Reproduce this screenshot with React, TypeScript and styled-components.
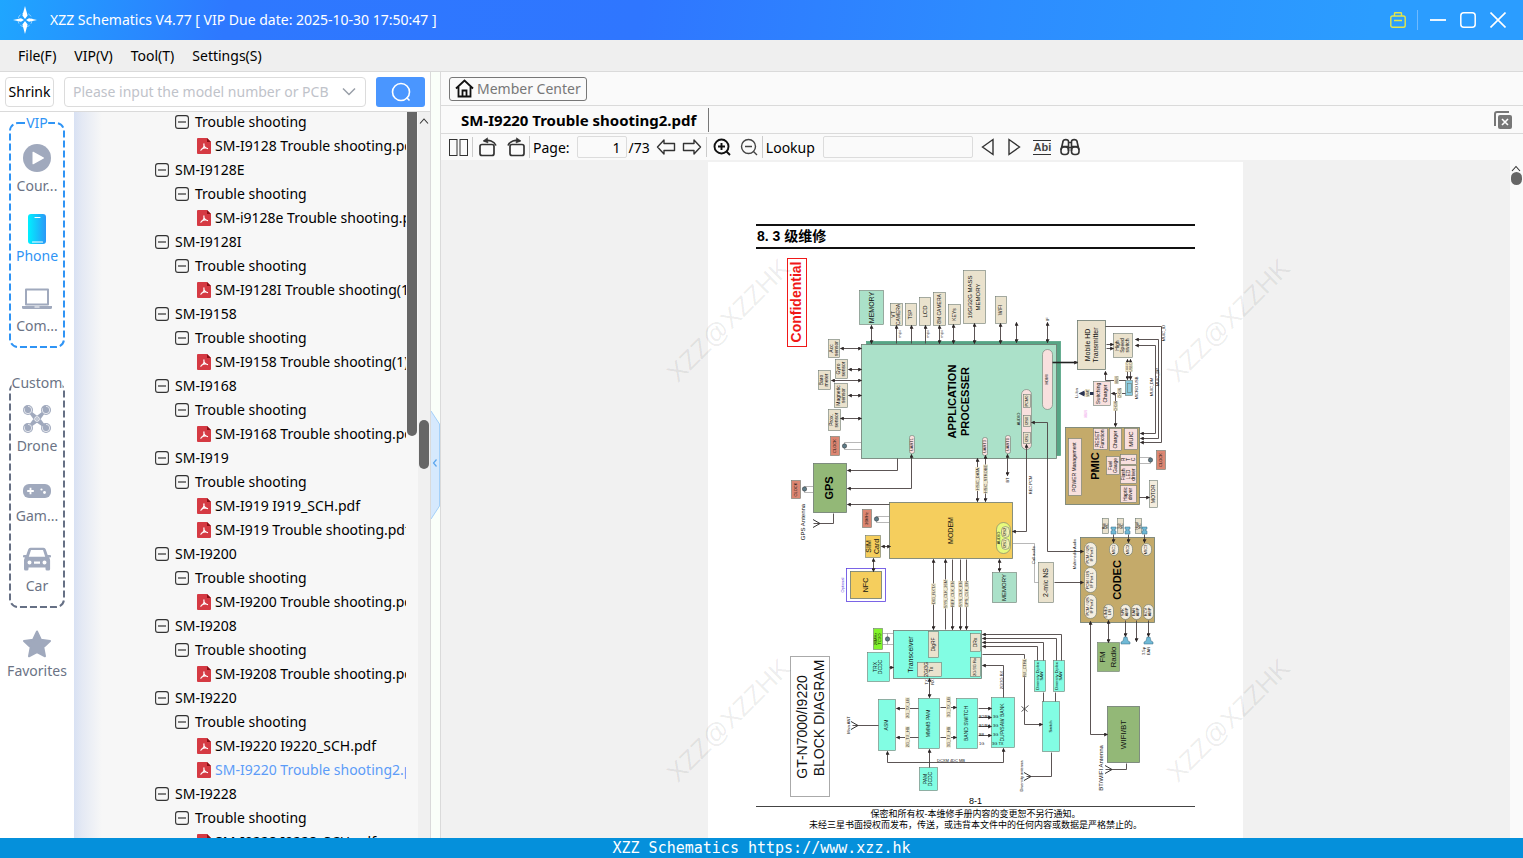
import React from 'react';
import styled, { createGlobalStyle, css } from 'styled-components';

const UI = '"Noto Sans", "Open Sans", "Noto Sans CJK SC", sans-serif';
const ARIAL = '"Liberation Sans", Arial, "Noto Sans CJK SC", sans-serif';

const Global = createGlobalStyle`
  * { box-sizing: border-box; }
  body { margin: 0; font-family: ${UI}; font-size: 14px; color: #000; }
  button, input { font: inherit; color: inherit; }
  svg { display: block; flex: none; }
`;

const Shell = styled.div`
  display: flex;
  flex-direction: column;
  height: 100vh;
  overflow: hidden;
  background: #fafafa;
`;

/* ---------- title bar and menu ---------- */

const TitleBar = styled.header`
  flex: none;
  display: flex;
  align-items: center;
  height: 40px;
  padding: 0 16px 0 12px;
  background: linear-gradient(100deg, #1fa6ff 0%, #2e78ff 15%, #2f76ff 42%, #2d8cff 65%, #2b9dff 90%);
  color: #fff;
`;
const AppTitle = styled.h1`
  flex: 1;
  margin: 0 0 0 12px;
  font-size: 14px;
  font-weight: 400;
  line-height: 20px;
  white-space: nowrap;
`;
const WindowButtons = styled.div`
  display: flex;
  align-items: center;
  gap: 12px;
`;
const IconButton = styled.button`
  flex: none;
  display: flex;
  align-items: center;
  justify-content: center;
  width: ${(p: { $w?: number }) => p.$w ?? 18}px;
  height: 20px;
  padding: 0;
  border: 0;
  background: none;
`;
const TitleDivider = styled.span`
  width: 1px;
  height: 20px;
  margin: 0 -1px 0 -2px;
  background: #6fbaff;
`;
const MenuBar = styled.nav`
  flex: none;
  display: flex;
  align-items: center;
  gap: 18px;
  height: 32px;
  padding: 0 18px;
  background: #efefef;
  border-bottom: 1px solid #dadada;
`;
const MenuButton = styled.button`
  padding: 0;
  border: 0;
  background: none;
  line-height: 20px;
`;

/* ---------- left side ---------- */

const Body = styled.div`
  flex: 1;
  display: flex;
  min-height: 0;
`;
const LeftPanel = styled.aside`
  flex: none;
  display: flex;
  flex-direction: column;
  width: 431px;
  border-right: 1px solid #dadada;
  background: #fff;
`;
const SearchRow = styled.form`
  flex: none;
  display: flex;
  align-items: center;
  gap: 10px;
  height: 40px;
  padding: 0 5px;
  border-bottom: 1px solid #dadada;
`;
const ShrinkButton = styled.button`
  width: 49px;
  height: 30px;
  padding: 0;
  border: 1px solid #dcdcdc;
  border-radius: 4px;
  background: #fff;
`;
const ModelBox = styled.label`
  flex: 1;
  display: flex;
  align-items: center;
  min-width: 0;
  height: 30px;
  padding: 0 8px;
  border: 1px solid #dcdcdc;
  border-radius: 4px;
`;
const ModelInput = styled.input`
  flex: 1;
  min-width: 0;
  padding: 0;
  border: 0;
  outline: 0;
  background: none;
  &::placeholder { color: #bfc3ca; opacity: 1; }
`;
const SearchButton = styled.button`
  display: flex;
  align-items: center;
  justify-content: center;
  width: 49px;
  height: 30px;
  padding: 0;
  border: 0;
  border-radius: 3px;
  background: #4a96ff;
`;
const Browser = styled.div`
  flex: 1;
  display: flex;
  min-height: 0;
`;
const CategoryNav = styled.nav`
  flex: none;
  display: flex;
  flex-direction: column;
  width: 74px;
  padding: 10px 0;
  background: #fff;
`;
const Group = styled.section<{ $color: string }>`
  position: relative;
  margin: 0 8px 34px;
  padding-top: 16px;
  color: ${(p) => p.$color};
`;
const GroupFrame = styled.svg`
  position: absolute;
  inset: 0;
  width: 100%;
  height: 100%;
`;
const GroupName = styled.h2`
  position: absolute;
  top: -9px;
  left: 50%;
  transform: translateX(-50%);
  margin: 0;
  background: #fff;
  font-size: 14px;
  font-weight: 400;
  line-height: 20px;
`;
const Category = styled.button<{ $active?: boolean }>`
  position: relative;
  display: flex;
  flex-direction: column;
  align-items: center;
  width: 100%;
  height: 70px;
  padding: 0;
  border: 0;
  background: none;
  font-size: 14px;
  line-height: 16px;
  color: ${(p) => (p.$active ? '#2f94f5' : '#6b7385')};
`;
const CategoryIcon = styled.span`
  display: flex;
  align-items: center;
  justify-content: center;
  height: 40px;
`;
const Favorites = styled.div`
  margin-top: -19px;
`;
const Tree = styled.ul`
  flex: 1;
  min-width: 0;
  margin: 0;
  padding: 0;
  list-style: none;
  overflow: hidden;
  background: linear-gradient(90deg, #d8e1f3 0, #e4e9f4 8px, #f7f7f7 28px);
`;
const TreeRow = styled.li<{ $level: number; $active?: boolean }>`
  display: flex;
  align-items: center;
  gap: ${(p) => (p.$level === 2 ? 4 : 6)}px;
  height: 24px;
  margin-right: 1px;
  padding-left: ${(p) => [81, 101, 123][p.$level]}px;
  overflow: hidden;
  white-space: nowrap;
  line-height: 24px;
  ${(p) => p.$active && css`color: #5c9cf8;`}
  &:first-child { margin-top: -2px; }
`;
const ToggleButton = styled.button`
  flex: none;
  display: flex;
  padding: 0;
  border: 0;
  background: none;
`;
const TreeBar = styled.div`
  flex: none;
  display: flex;
  flex-direction: column;
  width: 11px;
  padding: 0 1px 0 0;
  background: #f7f7f7;
`;
const BarSpace = styled.div<{ $grow: number }>`
  flex: ${(p) => p.$grow} 0 0;
`;
const TreeThumb = styled.div`
  flex: 324 0 0;
  background: #666;
  border-radius: 0 0 5px 5px;
`;
const ListBar = styled.div`
  flex: none;
  display: flex;
  flex-direction: column;
  align-items: center;
  width: 12px;
  background: #f0f0f0;
`;
const ListThumb = styled.div`
  width: 10px;
  height: 49px;
  border-radius: 5px;
  background: #666;
`;
const Gutter = styled.div`
  flex: none;
  display: flex;
  align-items: center;
  width: 9px;
  padding-top: 19px;
  background: #fafff9;
`;
const CollapseButton = styled.button`
  padding: 0;
  border: 0;
  background: none;
`;

/* ---------- viewer ---------- */

const Viewer = styled.main`
  flex: 1;
  display: flex;
  flex-direction: column;
  min-width: 0;
  border-left: 1px solid #dadada;
`;
const MemberRow = styled.div`
  flex: none;
  display: flex;
  align-items: center;
  height: 34px;
  padding: 0 8px;
  border-bottom: 1px solid #dadada;
`;
const MemberButton = styled.button`
  display: flex;
  align-items: center;
  gap: 3px;
  height: 24px;
  padding: 0 5px;
  border: 1px solid #777;
  border-radius: 3px;
  background: #fafafa;
  color: #777;
`;
const TabRow = styled.div`
  flex: none;
  display: flex;
  align-items: center;
  justify-content: space-between;
  height: 28px;
  padding: 0 10px 0 8px;
  border-bottom: 1px solid #dadada;
`;
const Tab = styled.button`
  height: 24px;
  padding: 0 12px;
  border: 0;
  border-right: 1px solid #777;
  background: none;
  font-size: 15px;
  font-weight: 700;
`;
const Toolbar = styled.div`
  flex: none;
  display: flex;
  align-items: center;
  height: 26px;
  padding: 0 8px;
  white-space: nowrap;
`;
const ToolGroup = styled.div<{ $gap: number }>`
  display: flex;
  align-items: center;
  gap: ${(p) => p.$gap}px;
  padding-right: 4px;
  & + & { padding-left: 6px; border-left: 1px solid #ccc; }
`;
const LabelledGroup = styled(ToolGroup)`
  && { padding-left: 3px; }
`;
const Field = styled.input<{ $w: number }>`
  width: ${(p) => p.$w}px;
  height: 22px;
  padding: 0 5px;
  border: 1px solid #dcdcdc;
  border-radius: 2px;
  background: #fafafa;
  text-align: right;
`;
const PageCount = styled.span`
  margin-left: -5px;
`;
const Canvas = styled.div`
  flex: 1;
  display: flex;
  min-height: 0;
`;
const Desk = styled.div`
  position: relative;
  flex: 1;
  display: flex;
  justify-content: center;
  min-width: 0;
  padding-top: 2px;
  overflow: hidden;
  background: #f1f1f1;
`;
const Watermark = styled.svg`
  position: absolute;
  inset: 0;
  width: 100%;
  height: 100%;
  pointer-events: none;
`;
const Sheet = styled.article`
  flex: none;
  width: 535px;
  min-height: 700px;
  padding-top: 62px;
  background: #fff;
  font-family: ${ARIAL};
`;
const SheetTitle = styled.h2`
  margin: 0 48px;
  border-top: 2px solid #111;
  border-bottom: 2px solid #111;
  font-size: 14px;
  font-weight: 700;
  line-height: 21px;
  text-indent: 1px;
`;
const SheetFoot = styled.footer`
  margin: 0 48px;
  font-size: 9px;
  line-height: 11px;
  text-align: center;
  p { margin: 0; }
  p:first-child { line-height: 10px; border-bottom: 1px solid #444; margin-bottom: 2px; }
`;
const ViewBar = styled.div`
  flex: none;
  display: flex;
  flex-direction: column;
  align-items: center;
  justify-content: space-between;
  width: 13px;
  padding-top: 5px;
  background: #fafafa;
`;
const ViewThumb = styled.div`
  width: 11px;
  height: 13px;
  border-radius: 6px;
  background: #666;
`;
const StatusBar = styled.footer`
  flex: none;
  height: 20px;
  background: #0590db;
  color: #fff;
  font-family: "DejaVu Sans Mono", "Liberation Mono", monospace;
  font-size: 15px;
  line-height: 20px;
  text-align: center;
`;

/* ---------- block diagram ---------- */

const MINT = '#abe1c9';
const CREAM = '#eae2cd';
const PINK = '#f8e0de';
const SAND = '#c4aa6a';
const RED = '#dc8672';
const GREEN = '#93b877';
const GOLD = '#f5ce5d';
const AQUA = '#82fde3';

type Block = {
  x: number; y: number; w: number; h: number; fill: string;
  t?: string[]; s?: number; bold?: boolean; r?: number; stroke?: string; dx?: number; lh?: number;
};

const b = (x: number, y: number, w: number, h: number, fill: string, text = '', s = 5, more: Partial<Block> = {}): Block =>
  ({ x, y, w, h, fill, t: text ? text.split('|') : [], s, ...more });

const blocks: Block[] = [
  b(859, 290, 24, 34, MINT, 'MEMORY', 7),
  b(890, 303, 12, 22, CREAM, 'VT|CAMERA', 5),
  b(905, 303, 11, 22, CREAM, 'TSP', 5),
  b(919, 297, 11, 28, CREAM, 'LCD', 6),
  b(933, 292, 12, 33, CREAM, '8M CAMERA', 5),
  b(948, 304, 12, 20, CREAM, 'KEYs', 5),
  b(963, 270, 22, 53, CREAM, '16G/32G MASS|MEMORY', 6, { lh: 8 }),
  b(995, 296, 11, 27, CREAM, 'WIFI', 5),
  b(866, 341, 194, 114, '#56a585', '', 5, { stroke: '#56a585' }),
  b(861, 344, 195, 114, MINT, 'APPLICATION|PROCESSER', 11, { bold: true, lh: 13 }),
  b(828, 339, 11, 18, CREAM, 'Acc|sensor', 5),
  b(835, 359, 12, 19, CREAM, 'Gyro|sensor', 5),
  b(818, 370, 12, 19, CREAM, 'Baro|meter', 5),
  b(834, 383, 13, 24, CREAM, 'Magnetic|sensor', 5),
  b(828, 409, 12, 21, CREAM, 'Prox.|sensor', 5),
  b(830, 436, 9, 19, RED, 'CLOCK', 4),
  b(909, 435, 5, 18, PINK, 'UART1', 4, { r: 2 }),
  b(982, 437, 5, 18, PINK, 'UART3', 4, { r: 2 }),
  b(1005, 435, 5, 18, PINK, 'UART0', 4, { r: 2 }),
  b(1042, 349, 10, 60, PINK, 'HDMI', 4, { r: 5 }),
  b(1021, 389, 10, 60, PINK, '', 4, { r: 5 }),
  b(1023, 394, 7, 13, CREAM, 'PCM0', 4),
  b(1023, 415, 7, 11, CREAM, 'I2S0', 4),
  b(1023, 432, 7, 11, CREAM, 'I2S1', 4),
  b(1077, 320, 28, 49, CREAM, 'Mobile HD|Transmitter', 7, { lh: 8 }),
  b(1113, 333, 19, 24, CREAM, 'High|Speed|switch', 5),
  b(1093, 381, 17, 24, PINK, 'Switching|Charger', 5, { lh: 7 }),
  b(1125, 380, 7, 15, '#8bcbe0'),
  b(1127, 383, 4, 9, '#8bcbe0'),
  b(1065, 427, 74, 77, SAND, 'PMIC', 11, { bold: true, dx: -7 }),
  b(1068, 438, 13, 57, PINK, 'POWER Management', 5),
  b(1093, 428, 14, 21, PINK, 'RESET|Function', 5),
  b(1109, 428, 12, 22, PINK, 'Charger', 5),
  b(1124, 428, 13, 21, PINK, 'MUIC', 6),
  b(1106, 456, 13, 18, PINK, 'Fuel|Gauge', 5),
  b(1120, 454, 16, 10, PINK, 'R|T|C', 5),
  b(1120, 465, 16, 18, PINK, 'Flash|LED|driver', 5),
  b(1120, 485, 16, 17, PINK, 'Haptic|driver', 5),
  b(1156, 450, 9, 19, RED, 'CLOCK', 4),
  b(1149, 480, 8, 27, '#f3ecdd', 'MOTOR', 5),
  b(813, 463, 33, 49, GREEN, 'GPS', 11, { bold: true }),
  b(791, 480, 9, 18, RED, 'CLOCK', 4),
  b(889, 502, 123, 56, GOLD, 'MODEM', 7),
  b(862, 509, 9, 18, RED, '26MHz', 4),
  b(865, 535, 15, 22, GOLD, 'SIM|Card', 7, { lh: 8 }),
  b(846, 568, 39, 33, '#fff', '', 5, { stroke: '#5a3fe0' }),
  b(850, 571, 31, 27, GOLD, 'NFC', 7),
  b(996, 522, 14, 31, '#e8fa7c', 'AUDIO', 4, { r: 7, dx: -4 }),
  b(1001, 526, 8, 11, '#f3eeb0', 'I2S2', 4, { r: 4 }),
  b(1001, 538, 8, 11, '#f3eeb0', 'I2S1', 4, { r: 4 }),
  b(992, 572, 24, 30, MINT, 'MEMORY', 6),
  b(1038, 562, 15, 40, CREAM, '2-mic NS', 7),
  b(1080, 537, 74, 85, SAND, 'CODEC', 11, { bold: true }),
  b(1084, 542, 12, 24, '#f5eee0', 'PCM / I2S|IF Port3', 4, { r: 6 }),
  b(1084, 567, 12, 25, '#f5eee0', 'PCM / I2S|IF Port 1', 4, { r: 6 }),
  b(1084, 594, 12, 24, '#f5eee0', 'PCM / I2S|IF Port2', 4, { r: 6 }),
  b(1109, 543, 9, 12, '#f5eee0', 'MIC1', 4, { r: 5 }),
  b(1123, 543, 9, 12, '#f5eee0', 'MIC2', 4, { r: 5 }),
  b(1141, 543, 10, 12, '#f5eee0', 'MIC3', 4, { r: 5 }),
  b(1103, 604, 10, 15, '#f5eee0', 'LINE2|L/R', 4, { r: 5 }),
  b(1120, 604, 10, 15, '#f5eee0', 'SPK|AMP', 4, { r: 5 }),
  b(1131, 604, 10, 15, '#f5eee0', 'EAR|AMP', 4, { r: 5 }),
  b(1143, 604, 10, 15, '#f5eee0', 'RCV|AMP', 4, { r: 5 }),
  b(1102, 518, 6, 15, CREAM, 'Main|MIC', 3),
  b(1117, 518, 6, 15, CREAM, 'Sub|MIC', 3),
  b(1135, 518, 6, 15, CREAM, 'Head|MIC', 3),
  b(1097, 642, 22, 29, GREEN, 'FM|Radio', 8, { lh: 11 }),
  b(1107, 706, 32, 56, GREEN, 'WIFI/BT', 8),
  b(1034, 660, 11, 31, AQUA, 'Diversity Diplex|SAW', 4),
  b(1053, 660, 11, 31, AQUA, 'Diversity Diplex|SAW', 4),
  b(1042, 701, 17, 50, AQUA, 'Switch', 4),
  b(893, 630, 88, 48, AQUA, 'Transceiver', 7, { dx: -27, lh: 8 }),
  b(928, 631, 10, 26, CREAM, 'DigRF', 5),
  b(917, 662, 24, 14, CREAM, '2G/3G|Tx', 5),
  b(970, 633, 10, 18, CREAM, 'DRx', 5),
  b(970, 657, 10, 19, CREAM, '2G/3G Rx', 4),
  b(873, 628, 9, 21, '#82f52a', '26MHz|TCXO', 4),
  b(867, 652, 22, 29, AQUA, 'TRX|DCDC', 5),
  b(878, 699, 17, 51, AQUA, 'ASM', 5),
  b(918, 698, 21, 50, AQUA, 'MMMB PAM', 5),
  b(956, 698, 21, 50, AQUA, 'BAND SWITCH', 5),
  b(991, 697, 23, 50, AQUA, 'DUP/SAW BANK', 5),
  b(919, 767, 18, 23, AQUA, 'PAM|DCDC', 5),
];

/* Wires: points, then which ends carry an arrow head (s = start, e = end). */
const wires: [string, string][] = [
  ['871,325 871,343', 'se'], ['896,325 896,343', 's'], ['911,325 911,343', 's'], ['925,325 925,343', 's'],
  ['939,325 939,343', 'se'], ['953,324 953,343', 'se'], ['974,323 974,343', 'se'], ['1000,323 1000,343', 'se'],
  ['1016,322 1016,342', 'se'], ['1047,322 1047,342', 'se'],
  ['840,348 861,348', 'se'], ['848,369 861,369', 'se'], ['831,380 861,380', 'se'], ['848,395 861,395', 'se'], ['840,418 861,418', 'se'],
  ['1105,326 1161,326 1161,442 1140,442', 'e'],
  ['1135,339 1158,339 1158,438 1140,438', 'se'], ['1135,345 1155,345 1155,433 1140,433', 'se'],
  ['1106,344 1113,344', 'e'], ['1106,348 1113,348', 'e'],
  ['1127,359 1127,379', 'se'], ['1130,359 1130,379', 'se'],
  ['1105,371 1105,380 1125,380', 's'], ['1111,393 1125,393', 's'], ['1115,393 1115,426', 'e'],
  ['1139,497 1149,497', 'e'],
  ['1026,444 1026,531 1012,531', 'se'], ['1031,422 1047,422 1047,551 1083,551', 'se'],
  ['897,458 897,470 847,470', 'e'], ['911,454 911,488 847,488', 'se'], ['889,504 847,504', 'e'],
  ['881,546 890,546', 'se'], ['873,558 873,571', 'se'], ['999,559 999,571', 'se'],
  ['977,458 977,501', 'se'], ['985,455 985,501', 'se'], ['1007,454 1007,475', 'se'],
  ['933,559 933,629', 'se'], ['945,559 945,629', 's'], ['952,559 952,629', 'e'], ['960,559 960,629', 'e'], ['966,559 966,629', 'e'],
  ['1054,582 1083,582', 'e'],
  ['1090,621 1090,734 1107,734', 'se'],
  ['1113,534 1113,542', 'e'], ['1128,534 1128,542', 'e'], ['1144,534 1144,542', 'e'],
  ['1108,620 1108,642', 'se'], ['1125,620 1125,636', 'e'], ['1136,620 1136,641', 'e'], ['1148,620 1148,636', 'e'],
  ['982,634 1061,634 1061,660', 's'], ['982,638 1056,638 1056,660', 's'], ['982,642 1043,642 1043,660', 's'], ['982,646 1037,646 1037,660', 's'],
  ['982,654 1024,654 1024,724 1042,724', 'e'], ['1043,692 1043,701', ''], ['1055,692 1055,701', ''],
  ['1051,752 1051,776 1026,776', ''], ['889,667 893,667', 'e'],
  ['918,708 896,708', 'e'], ['918,737 896,737', 'e'], ['940,707 956,707', 'e'], ['940,737 956,737', 'e'],
  ['978,708 991,708', 'e'], ['978,717 991,717', 'e'], ['978,726 991,726', 'e'], ['978,735 991,735', 'e'],
  ['929,678 929,697', 'se'], ['1003,697 1003,665 982,665', 'e'],
  ['887,751 887,762 1003,762 1003,748', 'se'], ['929,749 929,767', 's'],
  ['878,725 852,725', ''], ['833,513 833,523 813,523', ''], ['1126,763 1126,769 1105,769', ''],
];
const thinWires = [
  '861,442 844,442 844,449 861,449', '813,486 804,486 804,492 813,492', '889,516 876,516 876,522 889,522',
  '882,633 893,633', '882,644 893,644', '887,633 887,644', '1139,457 1150,457 1150,463 1139,463',
  '1012,543 1034,543 1034,582 1038,582',
];
const dots = [[844, 446], [804, 489], [876, 519], [887, 639], [1150, 460]];

/* Free labels: x, y, text, size, colour, tinted strip behind the text */
const labels: [number, number, string, number, string?, boolean?][] = [
  [802, 522, 'GPS  Antenna', 6], [842, 585, 'Optional', 4, '#5a3fe0'],
  [1007, 480, 'BT', 4], [1030, 485, 'REC PCM', 4], [1018, 419, 'AUDIO', 4], [1047, 319, 'IF', 4],
  [1151, 387, 'MUIC_DM', 4], [1157, 377, 'MUIC_DP', 4], [1163, 333, 'MUIC_ID', 4],
  [1076, 393, 'Li-Ion', 4], [1136, 388, 'MICRO USB', 4], [1085, 414, 'VBUS', 3, '#ee8ae6'],
  [1033, 555, 'Call audio', 4], [1074, 554, 'Multimedia Audio', 4],
  [1100, 768, 'BT/WIFI  Antenna', 6], [1021, 776, 'Diversity antenna', 4], [848, 725, 'Main ANT', 4],
  [899, 334, 'mipi', 4], [927, 334, 'mipi', 4], [941, 334, 'mipi', 4],
  [1143, 651, '3.5φ', 4], [1148, 651, 'EAR', 4],
  [977, 479, 'HSIC_DATA', 4, '#333', true], [985, 479, 'HSIC_STROBE', 4, '#333', true],
  [933, 594, 'DIG_RXTX', 4, '#333', true], [945, 594, 'SYS_CLK_26M', 4, '#333', true], [952, 594, 'REF_CLK_EN', 4, '#333', true],
  [960, 594, 'SYS_CLK_EN', 4, '#333', true], [966, 594, 'GPS_CLK_EN', 4, '#333', true],
  [907, 708, '2G_TX_LB', 4, '#333', true], [907, 737, '2G_TX_HB', 4, '#333', true],
  [948, 707, '3G_TX_LB', 4, '#333', true], [948, 737, '3G_TX_HB', 4, '#333', true],
  [1024, 668, 'RX_CTRL', 4, '#333', true], [1001, 680, '2G/3G RX', 4], [926, 682, 'TX', 4], [932, 682, 'RX', 4],
  [1127, 367, 'USB D', 3, '#333', true], [1130, 367, 'USB D', 3, '#333', true],
  [1116, 380, 'VBUS', 3, '#333', true], [1119, 393, 'CHGIN', 3, '#333', true], [1115, 406, 'CHGIN', 3, '#333', true],
  [1087, 393, 'VBAT', 3, '#333', true],
];

function Turned({ x, y, size, bold, fill = '#111', children }: {
  x: number; y: number; size: number; bold?: boolean; fill?: string; children: React.ReactNode;
}) {
  return (
    <text transform={`translate(${x} ${y}) rotate(-90)`} textAnchor="middle" dy="0.36em"
      fontSize={size} fontWeight={bold ? 700 : 400} fill={fill}>{children}</text>
  );
}

function Antenna({ x, y }: { x: number; y: number }) {
  return <path d={`M${x} ${y - 4}L${x + 7} ${y}L${x} ${y + 4}`} fill="none" stroke="#333" />;
}

function BlockDiagram() {
  return (
    <svg width="535" height="547" viewBox="708 249 535 547" overflow="visible" fontFamily={ARIAL} role="img" aria-label="GT-N7000/I9220 block diagram">
      <defs>
        <marker id="head" viewBox="0 0 6 6" refX="5" refY="3" markerWidth="4" markerHeight="4" markerUnits="userSpaceOnUse" orient="auto-start-reverse">
          <path d="M0 0L6 3L0 6z" fill="#2c2626" />
        </marker>
      </defs>
      <rect x="787.5" y="258.5" width="19" height="88" fill="#fff" stroke="#f01818" />
      <Turned x={796} y={302} size={14} bold fill="#f01818">Confidential</Turned>
      <rect x="790.5" y="656.5" width="39" height="140" fill="#fff" stroke="#aaa" />
      <Turned x={802} y={727} size={14}>GT-N7000/I9220</Turned>
      <Turned x={819} y={718} size={14}>BLOCK DIAGRAM</Turned>
      {blocks.map((k, i) => (
        <g key={i}>
          <rect x={k.x + 0.5} y={k.y + 0.5} width={k.w} height={k.h} rx={k.r ?? 0} fill={k.fill}
            stroke={k.stroke ?? '#6d7a70'} strokeWidth={k.w < 26 ? 0.6 : 0.8} />
          {k.t!.map((line, n) => (
            <Turned key={n} size={k.s!} bold={k.bold} fill={k.bold ? '#000' : '#111'}
              x={k.x + k.w / 2 + (k.dx ?? 0) + (n - (k.t!.length - 1) / 2) * (k.lh ?? k.s!)}
              y={k.y + 0.5 + k.h / 2}>{line}</Turned>
          ))}
        </g>
      ))}
      <g transform="translate(.5 .5)" fill="none">
        {thinWires.map((p) => <polyline key={p} points={p} stroke="#888" strokeWidth=".6" />)}
        {wires.map(([p, ends]) => (
          <polyline key={p} points={p} stroke="#4a4242" strokeWidth=".9"
            markerStart={ends.includes('s') ? 'url(#head)' : undefined}
            markerEnd={ends.includes('e') ? 'url(#head)' : undefined} />
        ))}
        <path d="M1052 362H1077" stroke="#222" strokeWidth="1.6" markerEnd="url(#head)" />
        <path d="M1093 393H1084" stroke="#2b3350" strokeWidth="3" />
        <path d="M1078 393l6 -3v6z" fill="#2b3350" />
        <path d="M1021 706l6 5M1021 711l7 -6" stroke="#333" strokeWidth=".8" />
      </g>
      {dots.map(([x, y]) => <circle key={x} cx={x + 0.5} cy={y} r="2.2" fill="#5c7a86" stroke="#333" strokeWidth=".5" />)}
      <Antenna x={851} y={725.5} />
      <Antenna x={813} y={523.5} />
      <Antenna x={1105} y={769.5} />
      <Antenna x={1024} y={776.5} />
      {[1113, 1127, 1144].map((x) => (
        <path key={x} d={`M${x - 2} 527h5v2l-2 1l2 1v3h-5v-3l2 -1l-2 -1z`} fill="#6fb9d6" stroke="#3a6a80" strokeWidth=".5" />
      ))}
      {[1125, 1148].map((x) => (
        <path key={x} d={`M${x - 1} 637h3l1 4l2 1v2h-9v-2l2 -1z`} fill="#6fb9d6" stroke="#3a6a80" strokeWidth=".5" />
      ))}
      {labels.map(([x, y, text, size, fill, strip], i) => (
        <g key={i}>
          {strip && <rect x={x - 2} y={y - text.length * size * 0.33} width="5" height={text.length * size * 0.66} fill="#efe8cf" />}
          <Turned x={x + 0.5} y={y} size={size} fill={fill}>{text}</Turned>
        </g>
      ))}
      <g fontSize="4" fill="#111">
        <text x="937" y="762">DCXM  4DC  MB</text>
        <text x="979" y="718">B2/B5</text><text x="979" y="727">B1/B4</text><text x="979" y="736">B8</text><text x="979" y="745">1G</text>
        <text x="993" y="718">3G</text><text x="993" y="727">3G</text><text x="993" y="736">3G</text><text x="992" y="745">3G TX</text>
      </g>
    </svg>
  );
}

/* ---------- icons ---------- */

const Logo = () => (
  <svg width="26" height="30" viewBox="0 0 26 30">
    <circle cx="13" cy="15" r="7" fill="none" stroke="#8fd0ff" strokeWidth="1" strokeDasharray="4 2" />
    <path d="M13 1l2.6 9.500L13 14l-2.600-3.500zM13 29l2.600-9.500L13 16l-2.600 3.500zM1 15l8-1.800L12 15l-3 1.800zM25 15l-8-1.800L14 15l3 1.800z" fill="#fff" />
  </svg>
);
const stroke = { fill: 'none', stroke: '#333', strokeWidth: 1.4 } as const;

const PlayIcon = () => (
  <svg width="28" height="28" viewBox="0 0 28 28"><circle cx="14" cy="14" r="14" fill="#a0a9bd" /><path d="M9.500 8.300v11.400a.6.600 0 0 0 .9.500l10.300-5.700a.6.600 0 0 0 0-1L10.400 7.800a.6.600 0 0 0-.9.500z" fill="#fff" /></svg>
);
const PhoneIcon = () => (
  <svg width="18" height="32" viewBox="0 -2 18 32">
    <defs><linearGradient id="ph"><stop stopColor="#00f0ff" /><stop offset="1" stopColor="#2b98f7" /></linearGradient></defs>
    <rect width="18" height="30" rx="3" fill="url(#ph)" /><path d="M7 3.500h5M4.500 28h10" stroke="#fff" strokeWidth="1.200" strokeLinecap="round" />
  </svg>
);
const LaptopIcon = () => (
  <svg width="30" height="24" viewBox="0 -2 30 24"><path d="M4 1.500h22v15H4z" fill="none" stroke="#a0a9bd" strokeWidth="2" strokeLinejoin="round" /><path d="M0 18h30v1.500a1.500 1.500 0 0 1-1.500 1.500h-27A1.500 1.500 0 0 1 0 19.500z" fill="#a0a9bd" /><path d="M12.500 19h5" stroke="#fff" /></svg>
);
const DroneIcon = () => (
  <svg width="28" height="30" viewBox="0 -2 28 30">
    <path d="M5 5l9 7 9-7-6.500 9L23 23l-9-6.500L5 23l6.500-9z" fill="#a0a9bd" stroke="#a0a9bd" strokeWidth="2" strokeLinejoin="round" />
    {[[5, 5], [23, 5], [5, 23], [23, 23]].map(([x, y]) => (
      <g key={`${x}${y}`}><circle cx={x} cy={y} r="5" fill="#a0a9bd" /><circle cx={x} cy={y} r="3.700" fill="none" stroke="#fff" strokeWidth=".7" strokeDasharray="13 4" /></g>
    ))}
    <circle cx="14" cy="14" r="2.300" fill="#a0a9bd" stroke="#fff" strokeWidth=".9" /><circle cx="14" cy="14" r=".7" fill="#fff" />
  </svg>
);
const GameIcon = () => (
  <svg width="28" height="20" viewBox="0 -6 28 20"><rect width="28" height="14" rx="6" fill="#a0a9bd" /><path d="M7.500 3.700v6.600M4.200 7h6.600" stroke="#fff" strokeWidth="1.800" /><circle cx="18.500" cy="5.500" r="1.100" fill="#fff" /><circle cx="21.500" cy="8.500" r="1.400" fill="#fff" /></svg>
);
const CarIcon = () => (
  <svg width="28" height="26" viewBox="0 -2 28 26">
    <path fillRule="evenodd" d="M7.500.8h13a2.500 2.500 0 0 1 2.300 1.700L24.700 8H27a1 1 0 0 1 0 2.500h-.9c.7.900 1 1.800 1 3V22a1.500 1.500 0 0 1-1.500 1.500H24a1.500 1.500 0 0 1-1.500-1.500v-1.500h-17V22A1.500 1.500 0 0 1 4 23.500H2.500A1.500 1.500 0 0 1 1 22v-8.500c0-1.200.3-2.100 1-3h-1A1 1 0 0 1 1 8h2.300l1.900-5.500A2.500 2.500 0 0 1 7.500.8zM8 3L5.800 9.800h16.400L20 3zM6.500 13.500a2 2 0 1 0 0 4 2 2 0 0 0 0-4zm15 0a2 2 0 1 0 0 4 2 2 0 0 0 0-4zM11 14.500v2.300h6v-2.300z" fill="#a0a9bd" />
  </svg>
);
const StarIcon = () => (
  <svg width="30" height="30" viewBox="0 -2 30 30"><path d="M15 1.500l3.900 8.300 9.100 1.200-6.700 6.300 1.700 9L15 22l-8 4.300 1.700-9L2 11l9.100-1.200z" fill="#a0a9bd" stroke="#a0a9bd" strokeWidth="2" strokeLinejoin="round" /></svg>
);
const Collapse = () => (
  <svg width="14" height="14" viewBox="0 0 14 14"><rect x=".6" y=".6" width="12.800" height="12.800" rx="2.500" fill="none" stroke="#333" strokeWidth="1.100" /><path d="M3 7h8" stroke="#222" strokeWidth="1.100" /></svg>
);
const PdfIcon = () => (
  <svg width="14" height="16" viewBox="0 0 14 16"><path d="M1 0h9l4 4v11a1 1 0 0 1-1 1H1a1 1 0 0 1-1-1V1a1 1 0 0 1 1-1z" fill="#d53a43" /><path d="M10 0l4 4h-4z" fill="#8c1016" /><path d="M6.800 5.500c.9 2.500.2 4.500-3.300 7M6.800 5.500c-.2 2.500 1.200 4.700 4.200 5.200M4.500 11c2-1 4-1.400 6.500-.6" fill="none" stroke="#fff" strokeWidth="1.100" /></svg>
);
const UpChevron = ({ h }: { h: number }) => (
  <svg width="10" height={h} viewBox={`0 ${-h / 2} 10 ${h}`}><path d="M1 2.500L5 -2l4 4.500" fill="none" stroke="#333" strokeWidth="1.100" /></svg>
);
const RotateIcon = ({ flip }: { flip?: boolean }) => (
  <svg width="18" height="20" viewBox="0 0 18 20"><g transform={flip ? 'translate(18 0) scale(-1 1)' : undefined} {...stroke} strokeWidth={1.700}><rect x="1" y="7.500" width="14" height="11" rx="2" /><path d="M5 4c5-1.500 10 0 12 4.500" /><path d="M8.500.8L4 4l5 2z" fill="#333" strokeWidth=".5" /></g></svg>
);
const ArrowIcon = ({ flip }: { flip?: boolean }) => (
  <svg width="20" height="18" viewBox="0 0 20 18"><path transform={flip ? 'translate(20 0) scale(-1 1)' : undefined} d="M1.500 9L8 2v3.500h10.500v7H8V16z" {...stroke} strokeLinejoin="round" /></svg>
);
const ZoomIcon = ({ plus }: { plus?: boolean }) => (
  <svg width="18" height="18" viewBox="0 0 18 18" fill="none" stroke={plus ? '#111' : '#444'} strokeWidth={plus ? 1.900 : 1.400}><circle cx="8.500" cy="8.500" r="7" /><path d={`M13.500 13.500L17 17M5 8.500h7${plus ? 'M8.500 5v7' : ''}`} /></svg>
);
const Triangle = ({ flip }: { flip?: boolean }) => (
  <svg width="14" height="18" viewBox="0 0 14 18"><path transform={flip ? 'translate(14 0) scale(-1 1)' : undefined} d="M1.500 9L12 1.500v15z" {...stroke} /></svg>
);
const Binoculars = () => (
  <svg width="20" height="18" viewBox="0 0 20 18" {...stroke} strokeWidth={1.600}>
    <path d="M1 12L3 3.500C3.300 1 8.300 1 8.500 3.500V13M19 12L17 3.500C16.700 1 11.700 1 11.500 3.500V13M8.500 4.500h3M8.500 9.500h3M2.500 8.500h6M11.500 8.500h6" />
    <rect x="1" y="9" width="7.500" height="7.500" rx="3" /><rect x="11.500" y="9" width="7.500" height="7.500" rx="3" />
  </svg>
);
const AbiMark = styled.span`
  border-top: 1px solid #333;
  border-bottom: 1px solid #333;
  font-family: ${ARIAL};
  font-size: 11px;
  font-weight: 700;
  line-height: 13px;
  color: #444;
`;

/* ---------- data ---------- */

const models: [string, string[]][] = [
  ['', ['SM-I9128 Trouble shooting.pdf']],
  ['SM-I9128E', ['SM-i9128e Trouble shooting.pdf']],
  ['SM-I9128I', ['SM-I9128I Trouble shooting(1).pdf']],
  ['SM-I9158', ['SM-I9158 Trouble shooting(1).pdf']],
  ['SM-I9168', ['SM-I9168 Trouble shooting.pdf']],
  ['SM-I919', ['SM-I919 I919_SCH.pdf', 'SM-I919 Trouble shooting.pdf']],
  ['SM-I9200', ['SM-I9200 Trouble shooting.pdf']],
  ['SM-I9208', ['SM-I9208 Trouble shooting.pdf']],
  ['SM-I9220', ['SM-I9220 I9220_SCH.pdf', 'SM-I9220 Trouble shooting2.pdf']],
  ['SM-I9228', ['SM-I9228 I9228_SCH.pdf']],
];
const OPEN_FILE = 'SM-I9220 Trouble shooting2.pdf';

function CategoryGroup({ name, color, line, items }: {
  name: string; color: string; line: string; items: [string, React.ReactNode, boolean?][];
}) {
  return (
    <Group $color={color}>
      <GroupFrame><rect x="2" y="1" width="54" height="224" rx="8" fill="none" stroke={line} strokeWidth="2" strokeDasharray="7 3" /></GroupFrame>
      <GroupName>{name}</GroupName>
      {items.map(([label, icon, active]) => (
        <Category key={label} $active={active}><CategoryIcon>{icon}</CategoryIcon>{label}</Category>
      ))}
    </Group>
  );
}

export default function App() {
  return (
    <Shell>
      <Global />
      <TitleBar>
        <Logo />
        <AppTitle>XZZ Schematics V4.77 [ VIP Due date: 2025-10-30 17:50:47 ]</AppTitle>
        <WindowButtons>
          <IconButton aria-label="Toolbox"><svg width="16" height="16" viewBox="0 0 16 16" fill="none" stroke="#e3e64a" strokeWidth="1.400"><rect x=".8" y="4" width="14.400" height="11.200" rx="1.800" /><path d="M4.500 4V1.500q0-.7.700-.7h5.600q.7 0 .7.700V4M4 8.500h8" /></svg></IconButton>
          <TitleDivider />
          <IconButton aria-label="Minimize"><svg width="16" height="16" viewBox="0 0 16 16"><path d="M0 8h16" stroke="#fff" strokeWidth="1.800" /></svg></IconButton>
          <IconButton aria-label="Maximize"><svg width="16" height="16" viewBox="0 0 16 16"><rect x=".8" y=".8" width="14.400" height="14.400" rx="3" fill="none" stroke="#fff" strokeWidth="1.500" /></svg></IconButton>
          <IconButton aria-label="Close"><svg width="16" height="16" viewBox="0 0 16 16"><path d="M.5 .5l15 15M15.500 .5l-15 15" stroke="#fff" strokeWidth="1.600" /></svg></IconButton>
        </WindowButtons>
      </TitleBar>
      <MenuBar>
        {['File(F)', 'VIP(V)', 'Tool(T)', 'Settings(S)'].map((m) => <MenuButton key={m}>{m}</MenuButton>)}
      </MenuBar>
      <Body>
        <LeftPanel>
          <SearchRow onSubmit={(e) => e.preventDefault()}>
            <ShrinkButton type="button">Shrink</ShrinkButton>
            <ModelBox>
              <ModelInput aria-label="Model number" placeholder="Please input the model number or PCB" />
              <svg width="16" height="10" viewBox="0 0 16 10"><path d="M2 1.500l6 6 6-6" fill="none" stroke="#999fa8" strokeWidth="1.500" /></svg>
            </ModelBox>
            <SearchButton aria-label="Search"><svg width="20" height="20" viewBox="0 0 20 20" fill="none" stroke="#fff" strokeWidth="1.600"><circle cx="10" cy="10" r="8.500" /><path d="M15.500 15.500l3 3" /></svg></SearchButton>
          </SearchRow>
          <Browser>
            <CategoryNav>
              <CategoryGroup name="VIP" color="#2f94f5" line="#2f94f5"
                items={[['Cour...', <PlayIcon />], ['Phone', <PhoneIcon />, true], ['Com...', <LaptopIcon />]]} />
              <CategoryGroup name="Custom" color="#6b7385" line="#667085"
                items={[['Drone', <DroneIcon />], ['Gam...', <GameIcon />], ['Car', <CarIcon />]]} />
              <Favorites><Category><CategoryIcon><StarIcon /></CategoryIcon>Favorites</Category></Favorites>
            </CategoryNav>
            <Tree>
              {models.map(([model, files]) => (
                <React.Fragment key={model}>
                  {model && <TreeRow $level={0}><ToggleButton aria-label={`Collapse ${model}`}><Collapse /></ToggleButton>{model}</TreeRow>}
                  <TreeRow $level={1}><ToggleButton aria-label="Collapse folder"><Collapse /></ToggleButton>Trouble shooting</TreeRow>
                  {files.map((f) => <TreeRow key={f} $level={2} $active={f === OPEN_FILE}><PdfIcon />{f}</TreeRow>)}
                </React.Fragment>
              ))}
            </Tree>
            <TreeBar><TreeThumb /><BarSpace $grow={402} /></TreeBar>
            <ListBar><UpChevron h={18} /><BarSpace $grow={290} /><ListThumb /><BarSpace $grow={369} /></ListBar>
          </Browser>
        </LeftPanel>
        <Gutter>
          <CollapseButton aria-label="Collapse panel">
            <svg width="9" height="110" viewBox="0 0 9 110"><path d="M0 1L8.500 14V96L0 109" fill="#d6e9fd" stroke="#a4d0f8" /><path d="M5.500 49.500L2.500 53l3 3.500" fill="none" stroke="#5aa5ee" strokeWidth="1.200" /></svg>
          </CollapseButton>
        </Gutter>
        <Viewer>
          <MemberRow>
            <MemberButton>
              <svg width="19" height="19" viewBox="0 0 19 19" fill="none" stroke="#111" strokeWidth="1.800"><path d="M1 9.500L9.500 1.500l8.500 8M3.500 8v9.500h12V8M7.500 17.500v-6h4v6" /></svg>
              Member Center
            </MemberButton>
          </MemberRow>
          <TabRow>
            <Tab>{OPEN_FILE}</Tab>
            <IconButton $w={20} aria-label="Close all"><svg width="18" height="18" viewBox="0 0 18 18"><path d="M1 15V3a2 2 0 0 1 2-2h12" fill="none" stroke="#777" strokeWidth="2" /><rect x="4" y="4" width="14" height="14" rx="2" fill="#777" /><path d="M8 8l6 6M14 8l-6 6" stroke="#fff" strokeWidth="1.600" /></svg></IconButton>
          </TabRow>
          <Toolbar>
            <ToolGroup $gap={9}>
              <IconButton $w={19} aria-label="Two pages"><svg width="19" height="17" viewBox="0 0 19 17" fill="none" stroke="#333"><rect x=".5" y=".5" width="7.500" height="16" /><rect x="11" y=".5" width="7.500" height="16" /></svg></IconButton>
            </ToolGroup>
            <ToolGroup $gap={10}>
              <IconButton aria-label="Rotate left"><RotateIcon /></IconButton>
              <IconButton aria-label="Rotate right"><RotateIcon flip /></IconButton>
            </ToolGroup>
            <LabelledGroup $gap={7}>
              <label htmlFor="page">Page:</label>
              <Field id="page" $w={50} defaultValue="1" />
              <PageCount>/73</PageCount>
              <IconButton $w={19} aria-label="Previous page"><ArrowIcon /></IconButton>
              <IconButton $w={19} aria-label="Next page"><ArrowIcon flip /></IconButton>
            </LabelledGroup>
            <ToolGroup $gap={9}>
              <IconButton aria-label="Zoom in"><ZoomIcon plus /></IconButton>
              <IconButton aria-label="Zoom out"><ZoomIcon /></IconButton>
            </ToolGroup>
            <LabelledGroup $gap={8}>
              <label htmlFor="lookup">Lookup</label>
              <Field id="lookup" $w={150} />
              <IconButton $w={14} aria-label="Find previous"><Triangle /></IconButton>
              <IconButton $w={22} aria-label="Find next"><Triangle flip /></IconButton>
              <IconButton $w={19} aria-label="Match text"><AbiMark>Abi</AbiMark></IconButton>
              <IconButton $w={20} aria-label="Search document"><Binoculars /></IconButton>
            </LabelledGroup>
          </Toolbar>
          <Canvas>
            <Desk>
              <Sheet>
                <SheetTitle>8. 3 级维修</SheetTitle>
                <BlockDiagram />
                <SheetFoot>
                  <p>8-1</p>
                  <p>保密和所有权-本维修手册内容的变更恕不另行通知。</p>
                  <p>未经三星书面授权而发布，传送，或违背本文件中的任何内容或数据是严格禁止的。</p>
                </SheetFoot>
              </Sheet>
              <Watermark>
                {[[287, 160], [787, 160], [287, 560], [787, 560]].map(([x, y]) => (
                  <text key={`${x}-${y}`} transform={`translate(${x} ${y}) rotate(-45)`} textAnchor="middle" dy=".36em"
                    fontFamily={ARIAL} fontSize="26" fill="#000" fillOpacity=".08">XZZ@XZZHK</text>
                ))}
              </Watermark>
            </Desk>
            <ViewBar><div><UpChevron h={7} /><ViewThumb /></div></ViewBar>
          </Canvas>
        </Viewer>
      </Body>
      <StatusBar>XZZ Schematics https://www.xzz.hk</StatusBar>
    </Shell>
  );
}
